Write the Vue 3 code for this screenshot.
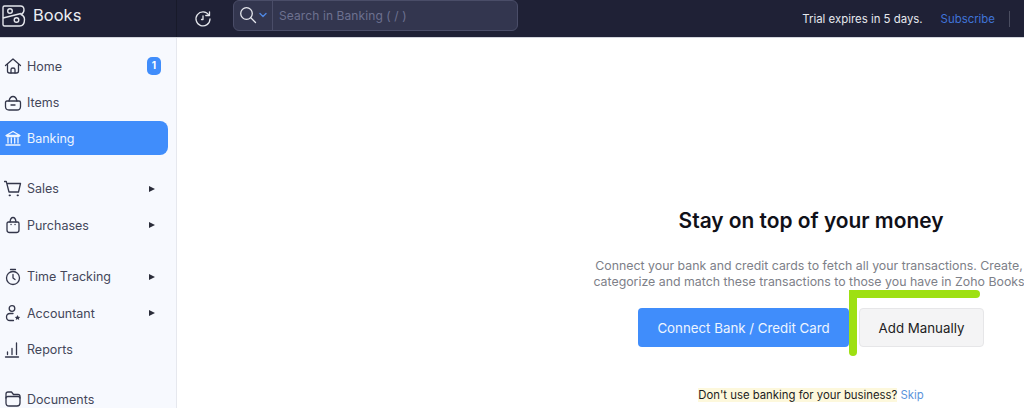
<script setup>
const groups = [
  [
    { label: 'Home', icon: 'home', badge: '1' },
    { label: 'Items', icon: 'items' },
    { label: 'Banking', icon: 'bank', active: true },
  ],
  [
    { label: 'Sales', icon: 'cart', arrow: true },
    { label: 'Purchases', icon: 'bag', arrow: true },
  ],
  [
    { label: 'Time Tracking', icon: 'timer', arrow: true },
    { label: 'Accountant', icon: 'person', arrow: true },
    { label: 'Reports', icon: 'chart' },
  ],
  [{ label: 'Documents', icon: 'folder' }],
]
</script>

<template>
  <div class="page">
    <header class="topbar">
      <div class="brand">
        <svg class="logo" width="26" height="26" viewBox="0 0 26 26" fill="none" stroke="currentColor" stroke-width="1.4" stroke-linejoin="round">
          <path d="M3 6.500Q3 5 4.500 5H20.500Q24 5 24 9q0 3-3 4.500 3.500 1.500 3.500 5 0 6.500-5 6.500H4.500Q3 25 3 23.500z" />
          <path d="M3 17 21 12.500" />
          <circle cx="10" cy="10" r="2.300" />
          <circle cx="16.500" cy="19" r="2.300" />
        </svg>
        <span class="brand-name">Books</span>
      </div>
      <div class="tools">
        <svg class="history" width="18" height="18" viewBox="0 0 18 18" fill="none" stroke="currentColor" stroke-width="1.300" stroke-linecap="round" stroke-linejoin="round">
          <path d="M14.800 5A7 7 0 1 0 16 9" />
          <path d="M15.500 1.800V5.500H11.800" />
          <path d="M9 6v3.500h-1.500" />
        </svg>
        <div class="search">
          <svg class="glass" width="18" height="18" viewBox="0 0 18 18" fill="none" stroke="currentColor" stroke-width="1.300" stroke-linecap="round">
            <circle cx="7.500" cy="7.500" r="5.800" />
            <path d="M11.800 11.800 16.500 16.500" />
          </svg>
          <svg class="caret" width="8" height="6" viewBox="0 0 8 6" fill="none" stroke="currentColor" stroke-width="1.400" stroke-linecap="round" stroke-linejoin="round">
            <path d="M1 1.500 4 4.500 7 1.500" />
          </svg>
          <span class="search-text">Search in Banking ( / )</span>
        </div>
      </div>
      <div class="trial">
        <span class="trial-text">Trial expires in 5 days.</span>
        <span class="subscribe">Subscribe</span>
        <span class="divider"></span>
      </div>
    </header>

    <div class="body">
      <aside class="sidebar">
        <div v-for="(group, g) in groups" :key="g" class="group">
          <div v-for="item in group" :key="item.label" class="item" :class="{ active: item.active }">
            <svg class="icon" width="18" height="18" viewBox="0 0 18 18" fill="none" stroke="currentColor" stroke-width="1.300" stroke-linecap="round" stroke-linejoin="round">
              <template v-if="item.icon === 'home'">
                <path d="M1.500 8.500 9 2l7.500 6.500" />
                <path d="M3.500 7.500V14q0 2 2 2h7q2 0 2-2V7.500" />
                <path d="M7 16v-3.500q0-1.500 2-1.500t2 1.500V16" />
              </template>
              <template v-else-if="item.icon === 'items'">
                <path d="M3 7h12q1.500 0 1.500 1.500v4q0 3.500-3.500 3.500H5q-3.500 0-3.500-3.500v-4Q1.500 7 3 7z" />
                <path d="M5 7q1-4.500 4-4.500T13 7" />
                <path d="M7 11h4" />
              </template>
              <template v-else-if="item.icon === 'bank'">
                <path d="M2 6.500 9 2.500l7 4z" />
                <path d="M4 9v5M7.300 9v5M10.700 9v5M14 9v5" />
                <path d="M2 16h14M3 7.500h12" />
              </template>
              <template v-else-if="item.icon === 'cart'">
                <path d="M0.500 1.500h1.800L5 12h9.500L16.500 3.500H4" />
                <path d="M5.500 15.300h.5M13.500 15.300h.5" stroke-width="1.800" />
              </template>
              <template v-else-if="item.icon === 'bag'">
                <path d="M4.500 6h9q1.500 0 1.500 1.500V14q0 2.500-2.500 2.500h-7Q3 16.500 3 14V7.500Q3 6 4.500 6z" />
                <path d="M6 6q.5-4.500 3-4.500T12 6" />
                <path d="M7 8.500h.1M11 8.500h.1" />
              </template>
              <template v-else-if="item.icon === 'timer'">
                <circle cx="9" cy="10" r="6.500" />
                <path d="M6.500 1.500h5M9 6.500V10l2 1.500" />
              </template>
              <template v-else-if="item.icon === 'person'">
                <circle cx="8" cy="4.500" r="2.800" />
                <path d="M9 9.500H6Q2.500 9.500 2.500 13t3.500 3.500h3.500" />
                <path d="m13.500 11 .9 1.700 1.800.2-1.300 1.300.3 1.800-1.700-.9-1.700.9.300-1.800-1.300-1.300 1.800-.2z" fill="currentColor" stroke="none" />
              </template>
              <template v-else-if="item.icon === 'chart'">
                <path d="M1.500 16h13" />
                <path d="M3.500 11v2.500M8 7.500v6M12.500 2v11.500" />
              </template>
              <template v-else>
                <path d="M2 12V4q0-2 2-2h3.500l2 2.500H14q2 0 2 2V13q0 3-3 3H5q-3 0-3-3z" />
                <path d="M2 8q0-1.500 2-1.500h10q2 0 2 1.500" />
              </template>
            </svg>
            <span class="label">{{ item.label }}</span>
            <span v-if="item.badge" class="badge">{{ item.badge }}</span>
            <span v-if="item.arrow" class="arrow"></span>
          </div>
        </div>
      </aside>

      <main class="main">
        <h1 class="title">Stay on top of your money</h1>
        <p class="copy">Connect your bank and credit cards to fetch all your transactions. Create,<br />categorize and match these transactions to those you have in Zoho Books</p>
        <div class="actions">
          <button class="btn primary">Connect Bank / Credit Card</button>
          <div class="second">
            <button class="btn ghost">Add Manually</button>
            <span class="mark-h"></span>
            <span class="mark-v"></span>
          </div>
        </div>
        <p class="skip-row"><span class="hl">Don't use banking for your business?</span> <span class="skip">Skip</span></p>
      </main>
    </div>
  </div>
</template>

<style scoped>
.page {
  width: 1024px;
  height: 408px;
  overflow: hidden;
  font-family: Inter, "Liberation Sans", sans-serif;
  background: #fff;
}
.topbar {
  height: 37px;
  background: #1f2136;
  border-bottom: 1px solid #d3d5dd;
  display: flex;
  align-items: center;
  color: #e8e9ee;
}
.brand {
  width: 176px;
  display: flex;
  align-items: center;
  flex: none;
  height: 100%;
  border-right: 1px solid #181a2a;
}
.logo {
  margin-top: -9px;
  color: #e4e6ec;
}
.brand-name {
  margin-left: 7px;
  margin-top: -7px;
  font-size: 16.500px;
  font-weight: 400;
  color: #eceef2;
}
.tools {
  display: flex;
  align-items: center;
  margin-left: 17px;
}
.history {
  color: #e4e6ec;
}
.search {
  margin-left: 21px;
  margin-top: -7px;
  width: 285px;
  height: 31px;
  box-sizing: border-box;
  background: #33364f;
  border: 1px solid #4a4d68;
  border-radius: 6px;
  display: flex;
  align-items: center;
  padding-left: 5px;
}
.glass {
  color: #e6e8ee;
}
.caret {
  margin-left: 2px;
  color: #4f86e0;
}
.search-text {
  margin-left: 5px;
  padding-left: 6px;
  border-left: 1px solid #4a4d68;
  height: 29px;
  line-height: 29px;
  font-size: 12px;
  letter-spacing: 0.1px;
  color: #6d7190;
}
.trial {
  margin-left: auto;
  display: flex;
  align-items: center;
  font-size: 11.400px;
}
.trial-text {
  color: #e6e8ee;
}
.subscribe {
  margin-left: 18px;
  color: #3f74d8;
}
.divider {
  margin-left: 14px;
  margin-right: 14px;
  width: 1px;
  height: 16px;
  background: #4a4d60;
}
.body {
  display: flex;
  height: 370px;
}
.sidebar {
  width: 177px;
  flex: none;
  box-sizing: border-box;
  background: #f7f9fe;
  border-right: 1px solid #e6e8ee;
  padding: 10px 8px 0 0;
  display: flex;
  flex-direction: column;
  gap: 14px;
}
.group:nth-child(3) {
  margin-top: 1px;
}
.group:nth-child(4) {
  margin-top: -1px;
}
.item {
  height: 36.500px;
  display: flex;
  align-items: center;
  padding-left: 4px;
  color: #44475a;
  font-size: 12.500px;
  border-radius: 0 8px 8px 0;
  position: relative;
}
.item.active {
  height: 34px;
  margin: 0 0 1.500px;
  background: #408dfb;
  color: #eef5ff;
}
.icon {
  flex: none;
  color: #33364a;
}
.active .icon {
  color: #eef5ff;
}
.label {
  margin-left: 5px;
}
.badge {
  position: absolute;
  left: 147px;
  top: 9px;
  width: 14px;
  height: 18px;
  border-radius: 5px;
  background: #408dfb;
  color: #fff;
  font-size: 10px;
  font-weight: 700;
  text-align: center;
  line-height: 17px;
}
.arrow {
  position: absolute;
  left: 149px;
  top: 15px;
  width: 0;
  height: 0;
  border-left: 6px solid #2b2d3a;
  border-top: 3.500px solid transparent;
  border-bottom: 3.500px solid transparent;
}
.main {
  flex: 1;
  min-width: 0;
  overflow: hidden;
  display: flex;
  flex-direction: column;
  align-items: center;
  padding-left: 421px;
  white-space: nowrap;
}
.title {
  margin: 170px 0 0;
  font-size: 20.900px;
  line-height: 26px;
  font-weight: 600;
  color: #101018;
}
.copy {
  margin: 24px -198px 0 -202px;
  font-size: 12.350px;
  line-height: 16px;
  text-align: center;
  color: #7d8088;
}
.actions {
  margin-top: 18px;
  display: flex;
  gap: 10px;
}
.btn {
  height: 39px;
  box-sizing: border-box;
  border-radius: 4px;
  font-family: inherit;
  font-size: 13.300px;
  padding: 0;
}
.primary {
  width: 211px;
  background: #408dfb;
  border: none;
  color: #eef5ff;
}
.ghost {
  width: 125px;
  background: #f4f4f5;
  border: 1px solid #e6e6e8;
  color: #1c1c22;
}
.second {
  position: relative;
}
.mark-h {
  position: absolute;
  left: -10px;
  top: -18px;
  width: 131px;
  height: 8px;
  background: #9ee012;
  border-radius: 0 4px 4px 0;
}
.mark-v {
  position: absolute;
  left: -10px;
  top: -18px;
  width: 8px;
  height: 66px;
  background: #9ee012;
  border-radius: 0 0 4px 4px;
}
.skip-row {
  margin: 41px 0 0;
  font-size: 11.350px;
  line-height: 15px;
  color: #1c1c22;
}
.hl {
  background: #fdf8dc;
}
.skip {
  color: #5b93dc;
}
</style>
